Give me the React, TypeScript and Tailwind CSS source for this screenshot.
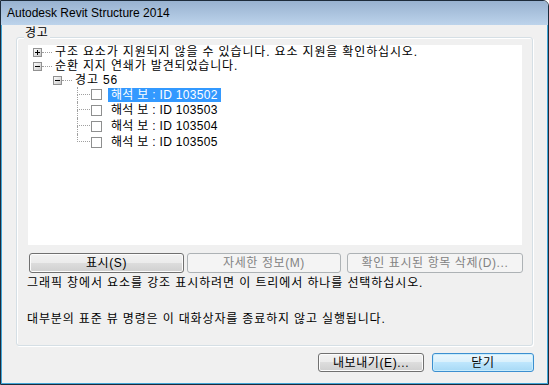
function Expander({ open }: { open: boolean }) {
  return (
    <svg width="9" height="9" viewBox="0 0 9 9" className="shrink-0">
      <defs>
        <linearGradient id={open ? "exo" : "exc"} x1="0" y1="0" x2="1" y2="1">
          <stop offset="0" stopColor="#ffffff" />
          <stop offset="1" stopColor="#c6c6c6" />
        </linearGradient>
      </defs>
      <rect x="0.5" y="0.5" width="8" height="8" fill={`url(#${open ? "exo" : "exc"})`} stroke="#919191" />
      <path d="M2 4.5h5" stroke="#000" />
      {!open && <path d="M4.5 2v5" stroke="#000" />}
    </svg>
  );
}

function Dots() {
  return <span className="w-[10px] shrink-0 border-t border-dotted border-[#a0a0a0]" />;
}

function Child({ label, last, selected, h }: { label: string; last?: boolean; selected?: boolean; h: string }) {
  return (
    <div className={`flex items-stretch ${h}`}>
      <div className="ml-[49px] flex w-[13px] shrink-0 flex-col">
        <div className="h-1/2 border-b border-l border-dotted border-[#a0a0a0]" />
        <div className={`flex-1 ${last ? "" : "border-l border-dotted border-[#a0a0a0]"}`} />
      </div>
      <div className="flex items-center">
        <span className="ml-[1px] h-[11px] w-[11px] shrink-0 border border-[#8e8f8f] bg-white" />
        <span
          className={`ml-[6px] flex h-[14px] items-center px-[3px] tracking-[0.3px] ${
            selected ? "bg-[#3399ff] text-white" : "text-black"
          }`}
        >
          {label}
        </span>
      </div>
    </div>
  );
}

const btn =
  "flex items-center justify-center rounded-[3px] border border-[#707070] bg-[linear-gradient(to_bottom,#f2f2f2_0%,#ebebeb_50%,#dddddd_50%,#cfcfcf_100%)] shadow-[inset_0_0_0_1px_#fcfcfc] text-black tracking-[0.6px]";
const btnOff =
  "flex items-center justify-center rounded-[3px] border border-[#adb2b5] bg-[#f4f4f4] text-[#838383] tracking-[0.6px]";

export default function App() {
  return (
    <div className="flex h-[385px] w-[549px] flex-col overflow-hidden rounded-tr-[6px] border border-[#1d2b3a] font-['Liberation_Sans','Noto_Sans_CJK_KR',sans-serif] text-[12px] leading-[14px] text-black">
      <div className="flex h-[24px] shrink-0 items-center bg-[linear-gradient(to_bottom,#98b2d0,#bcd3eb)] pl-[6px]">
        Autodesk Revit Structure 2014
      </div>

      <div className="flex flex-1 flex-col border-x border-b border-[#42a6d8] bg-[#f0f0f0]">
        <div className="relative ml-[14px] mt-[12px] flex h-[309px] w-[517px] flex-col rounded-[3px] border border-[#d5dfe5] pl-[11px] pt-[7px] shadow-[inset_1px_1px_0_#ffffff,1px_1px_0_#ffffff]">
          <span className="absolute -top-[12px] left-[7px] bg-[#f0f0f0] px-[1px] tracking-[0.8px]">경고</span>

          <div className="flex h-[200px] w-[494px] flex-col bg-white tracking-[0.85px]">
            <div className="flex h-[14px] items-center pl-[5px]">
              <Expander open={false} />
              <Dots />
              <span className="ml-[3px] whitespace-nowrap">
                구조 요소가 지원되지 않을 수 있습니다. 요소 지원을 확인하십시오.
              </span>
            </div>
            <div className="flex h-[14px] items-center pl-[5px]">
              <Expander open />
              <Dots />
              <span className="ml-[3px]">순환 지지 연쇄가 발견되었습니다.</span>
            </div>
            <div className="flex h-[14px] items-center pl-[25px]">
              <Expander open />
              <Dots />
              <span className="ml-[3px]">경고 56</span>
            </div>
            <Child label="해석 보 : ID 103502" selected h="h-[15px]" />
            <Child label="해석 보 : ID 103503" h="h-[16px]" />
            <Child label="해석 보 : ID 103504" h="h-[16px]" />
            <Child label="해석 보 : ID 103505" last h="h-[16px]" />
          </div>

          <div className="mt-[8px] flex h-[20px] pl-[1px]">
            <div className={`${btn} w-[155px]`}>표시(S)</div>
            <div className={`${btnOff} ml-[3px] w-[154px]`}>자세한 정보(M)</div>
            <div className={`${btnOff} ml-[6px] w-[176px]`}>확인 표시된 항목 삭제(D)...</div>
          </div>

          <p className="-ml-[1px] mt-[3px] whitespace-nowrap tracking-[0.9px]">
            그래픽 창에서 요소를 강조 표시하려면 이 트리에서 하나를 선택하십시오.
          </p>
          <p className="-ml-[1px] mt-[22px] whitespace-nowrap tracking-[0.85px]">
            대부분의 표준 뷰 명령은 이 대화상자를 종료하지 않고 실행됩니다.
          </p>
        </div>

        <div className="mt-[7px] flex h-[19px] justify-end pr-[13px]">
          <div className={`${btn} w-[106px]`}>내보내기(E)...</div>
          <div className="ml-[8px] flex w-[102px] items-center justify-center rounded-[3px] border border-[#3c8fd0] bg-[linear-gradient(to_bottom,#eaf6fd_0%,#d9f0fc_50%,#bee6fd_50%,#a7d9f5_100%)] shadow-[inset_0_0_0_1px_#c8ecfc] tracking-[0.6px]">
            닫기
          </div>
        </div>
      </div>
    </div>
  );
}
